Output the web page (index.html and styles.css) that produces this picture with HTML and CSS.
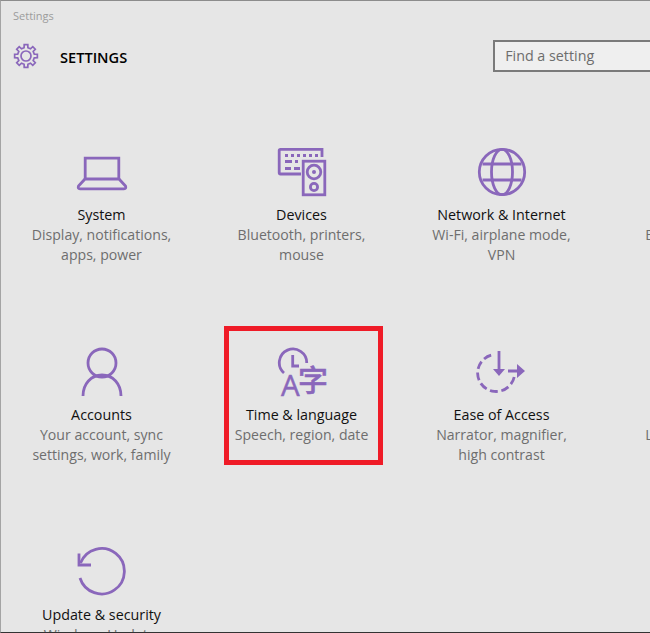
FILE: index.html
```html
<!DOCTYPE html>
<html lang="en">
<head>
<meta charset="utf-8">
<title>Settings</title>
<link rel="stylesheet" href="styles.css">
</head>
<body>
<div class="window">
  <div class="edge"></div>
  <div class="titlebar">Settings</div>
  <header class="header">
    <svg class="gear" viewBox="-13 -13 26 26"><polygon class="line thin" points="8.28,-1.91 11.36,-1.8 11.36,1.8 8.28,1.91 7.21,4.5 9.3,6.76 6.76,9.3 4.5,7.21 1.91,8.28 1.8,11.36 -1.8,11.36 -1.91,8.28 -4.5,7.21 -6.76,9.3 -9.3,6.76 -7.21,4.5 -8.28,1.91 -11.36,1.8 -11.36,-1.8 -8.28,-1.91 -7.21,-4.5 -9.3,-6.76 -6.76,-9.3 -4.5,-7.21 -1.91,-8.28 -1.8,-11.36 1.8,-11.36 1.91,-8.28 4.5,-7.21 6.76,-9.3 9.3,-6.76 7.21,-4.5"/><circle class="line thin" r="5"/></svg>
    <h1 class="heading">SETTINGS</h1>
    <div class="search">Find a setting</div>
  </header>
  <main class="grid">
    <section class="tile">
      <svg class="icon" viewBox="0 0 62 52"><path class="line" d="M14.2 33V12.2H47.8V33"/><path class="line" d="M14 33H48L54.5 40Q55.5 42.8 53 42.8H9Q6.5 42.8 7.5 40Z"/></svg>
      <div class="label">System</div>
      <div class="desc">Display, notifications,<br>apps, power</div>
    </section>
    <section class="tile">
      <svg class="icon" viewBox="0 0 62 52"><path class="line" d="M51 11V3.300H9.500Q8.200 3.300 8.200 4.600V26.500Q8.200 28 9.500 28H30"/><rect class="line" x="32.2" y="15.2" width="21.6" height="33.6"/><circle class="line" cx="43" cy="26" r="6.8"/><circle class="dot" cx="43" cy="26" r="2"/><circle class="line" cx="43" cy="41" r="3.6"/><path class="keys" d="M14 8h3v3h-3zM20 8h3v3h-3zM26 8h3v3h-3zM32 8h3v3h-3zM38 8h3v3h-3zM44 8h3v3h-3zM14 14h7v3h-7zM24 14h3v3h-3zM14 21h6v3h-6zM23 21h6v3h-6z"/></svg>
      <div class="label">Devices</div>
      <div class="desc">Bluetooth, printers,<br>mouse</div>
    </section>
    <section class="tile">
      <svg class="icon" viewBox="0 0 62 52"><circle class="line" cx="31" cy="26" r="22.7"/><ellipse class="line" cx="31" cy="26" rx="10.5" ry="22.7"/><path class="line" d="M11.5 18H50.5M11.5 34H50.5"/></svg>
      <div class="label">Network &amp; Internet</div>
      <div class="desc">Wi-Fi, airplane mode,<br>VPN</div>
    </section>
    <section class="tile">
      <div class="icon"></div>
      <div class="label">Personalization</div>
      <div class="desc">Background, lock<br>screen, colors</div>
    </section>
    <section class="tile">
      <svg class="icon" viewBox="0 0 62 52"><circle class="line" cx="31" cy="17" r="14"/><path class="line" d="M12 50C12 38 20 29 31 29S50 38 50 50"/></svg>
      <div class="label">Accounts</div>
      <div class="desc">Your account, sync<br>settings, work, family</div>
    </section>
    <section class="tile">
      <svg class="icon" viewBox="0 0 62 52"><path class="line" d="M13 27A13.700 13.700 0 1 1 35.700 17"/><path class="line" d="M21.700 9V20H28"/><text class="glyph latin" x="10" y="50">A</text><text class="glyph cjk" x="27" y="45">字</text></svg>
      <div class="label">Time &amp; language</div>
      <div class="desc">Speech, region, date</div>
    </section>
    <section class="tile">
      <svg class="icon" viewBox="0 0 62 52"><path class="line dash" d="M43.200 31A18.500 18.500 0 1 1 22.500 8.700"/><path class="line" d="M28 5V24M37 25H50"/><path class="dot" d="M22 23H34L28 30ZM46 18L54 25L46 32Z"/></svg>
      <div class="label">Ease of Access</div>
      <div class="desc">Narrator, magnifier,<br>high contrast</div>
    </section>
    <section class="tile">
      <div class="icon"></div>
      <div class="label">Privacy</div>
      <div class="desc">Location, camera</div>
    </section>
    <section class="tile">
      <svg class="icon" viewBox="0 0 62 52"><path class="line" d="M9.500 17A22.700 22.700 0 1 1 9 32"/><path class="line" d="M8 7.500V19H20"/></svg>
      <div class="label">Update &amp; security</div>
      <div class="desc">Windows Update,<br>recovery, backup</div>
    </section>
  </main>
  <div class="highlight"></div>
</div>
</body>
</html>
```
FILE: styles.css
```css
html, body {
  margin: 0;
  padding: 0;
}

body {
  width: 650px;
  height: 633px;
  overflow: hidden;
  font-family: "Open Sans", "Noto Sans", sans-serif;
}

.window {
  position: relative;
  box-sizing: border-box;
  width: 650px;
  height: 633px;
  overflow: hidden;
  background: #e6e6e6;
  border-top: 1px solid #8c8c8c;
  border-bottom: 1px solid #333;
  border-left: 1px solid #a4a4a4;
}

.edge {
  position: absolute;
  left: -1px;
  top: 0;
  width: 1px;
  height: 190px;
  background: linear-gradient(#444 0 44px, #b55 44px 62px, #aaa 62px 70px, #444 70px 82px, #a4a4a4 82px 130px, #47a 130px 135px, #a4a4a4 135px 160px, #bb9 160px 176px, #a4a4a4 176px 178px, #447 178px 190px);
}

.titlebar {
  height: 30px;
  padding: 0 0 0 12px;
  box-sizing: border-box;
  font-size: 11px;
  line-height: 30px;
  color: #9c9c9c;
}

.header {
  display: flex;
  align-items: center;
  height: 32px;
  margin-top: 9px;
  padding-left: 12px;
}

.gear {
  width: 26px;
  height: 26px;
  flex: none;
}

.heading {
  margin: 2px 0 0 21px;
  font-size: 14.6px;
  font-weight: 600;
  line-height: 20px;
  color: #000;
  flex: none;
}

.search {
  box-sizing: border-box;
  flex: none;
  width: 200px;
  height: 32px;
  margin-left: 366px;
  padding-left: 10px;
  background: #efefef;
  border: 2px solid #7a7a7a;
  font-size: 14.3px;
  line-height: 27px;
  color: #6d6d6d;
}

.grid {
  display: grid;
  grid-template-columns: repeat(4, 200px);
  grid-auto-rows: 200px;
  padding-top: 74px;
  padding-left: 1px;
}

.tile {
  display: flex;
  flex-direction: column;
  align-items: center;
  text-align: center;
}

.icon {
  display: block;
  width: 62px;
  height: 52px;
  flex: none;
  margin-bottom: 7px;
}

.label {
  margin-left: -1px;
  font-size: 14.3px;
  line-height: 20px;
  color: #111;
  white-space: nowrap;
}

.desc {
  margin-left: -1px;
  font-size: 14.1px;
  line-height: 20px;
  color: #6e6e6e;
  white-space: nowrap;
}

.line {
  fill: none;
  stroke: #8a67bb;
  stroke-width: 2.8;
}

.thin {
  stroke-width: 1.7;
}

.dash {
  stroke-dasharray: 8 3.6;
}

.dot,
.keys {
  fill: #8a67bb;
}

.glyph {
  fill: #8a67bb;
  stroke: #8a67bb;
  stroke-width: 0.5;
}

.latin {
  font-family: "Open Sans", sans-serif;
  font-size: 29.5px;
}

.cjk {
  font-family: "Noto Sans CJK SC", sans-serif;
  font-size: 30px;
  font-weight: 500;
}

.highlight {
  position: absolute;
  left: 223px;
  top: 325px;
  width: 149px;
  height: 129px;
  border: 5px solid #ef1b27;
}
```
